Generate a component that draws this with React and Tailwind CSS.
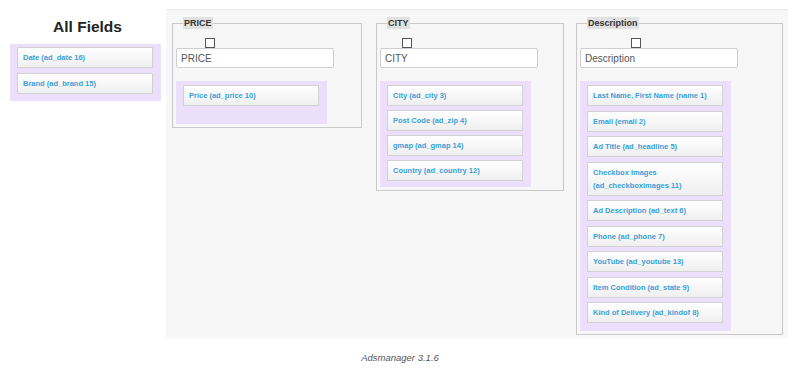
const font = { fontFamily: '"Liberation Sans", Arial, sans-serif' };

function FieldItem({ label }) {
    return (
        <div className="border border-[#d2d2d2] bg-gradient-to-b from-white to-[#efefef] px-[5px] py-[3px] text-[7.5px] font-bold leading-[13px] text-[#3b9fd8]">
            {label}
        </div>
    );
}

function FieldBox({ items, className }) {
    return (
        <div className={`flex flex-col gap-[4px] bg-[#ecdffc] pt-[4px] pb-[8px] pl-[7px] pr-[8px] ${className}`}>
            {items.map((item) => (
                <FieldItem key={item} label={item} />
            ))}
        </div>
    );
}

function Group({ title, placeholder, width, checkLeft, items, boxClass }) {
    return (
        <fieldset className={`border border-[#c9c9c9] px-[3px] pb-[3px] ${width}`}>
            <legend className="ml-[7px] bg-[#e1e1e1] px-[1px] text-[9px] font-bold leading-[12px] text-[#333]">
                {title}
            </legend>
            {/* checkbox */}
            <div className={`mt-[9px] h-[10px] w-[10px] border border-[#555] bg-white ${checkLeft}`}></div>
            <div className="flex h-[20px] w-[158px] items-center rounded-[2px] border border-[#cfcfcf] bg-white pl-[4px] text-[10px] text-[#555]">
                {placeholder}
            </div>
            <FieldBox items={items} className={`mt-[13px] w-[151px] ${boxClass}`} />
        </fieldset>
    );
}

export default function App() {
    return (
        <div className="h-[368px] w-[800px] overflow-hidden bg-white" style={font}>
            <div className="flex items-start">
                {/* Left column */}
                <div className="w-[166px] shrink-0">
                    <h2 className="mt-[17px] pl-[9px] text-center text-[15.5px] font-bold leading-[20px] text-[#222]">
                        All Fields
                    </h2>
                    <FieldBox
                        items={['Date (ad_date 16)', 'Brand (ad_brand 15)']}
                        className="ml-[10px] mt-[7px] w-[151px] !gap-[5px] !pt-[3px] !pb-[7px]"
                    />
                </div>

                {/* Main area */}
                <div className="mt-[9px] flex h-[329px] w-[622px] items-start border-t border-[#ebebeb] bg-[#f7f7f7] pl-[6px] pt-[7px]">
                    <Group
                        title="PRICE"
                        placeholder="PRICE"
                        width="w-[190px]"
                        checkLeft="ml-[29px]"
                        items={['Price (ad_price 10)']}
                        boxClass="min-h-[43px]"
                    />
                    <Group
                        title="CITY"
                        placeholder="CITY"
                        width="ml-[14px] w-[188px]"
                        checkLeft="ml-[22px]"
                        items={[
                            'City (ad_city 3)',
                            'Post Code (ad_zip 4)',
                            'gmap (ad_gmap 14)',
                            'Country (ad_country 12)',
                        ]}
                        boxClass="!pb-[6px]"
                    />
                    <Group
                        title="Description"
                        placeholder="Description"
                        width="ml-[12px] w-[207px]"
                        checkLeft="ml-[51px]"
                        boxClass="!gap-[4.5px]"
                        items={[
                            'Last Name, First Name (name 1)',
                            'Email (email 2)',
                            'Ad Title (ad_headline 5)',
                            'Checkbox Images (ad_checkboximages 11)',
                            'Ad Description (ad_text 6)',
                            'Phone (ad_phone 7)',
                            'YouTube (ad_youtube 13)',
                            'Item Condition (ad_state 9)',
                            'Kind of Delivery (ad_kindof 8)',
                        ]}
                    />
                </div>
            </div>

            <p className="mt-[13px] text-center text-[9.5px] italic text-[#555]">Adsmanager 3.1.6</p>
        </div>
    );
}
